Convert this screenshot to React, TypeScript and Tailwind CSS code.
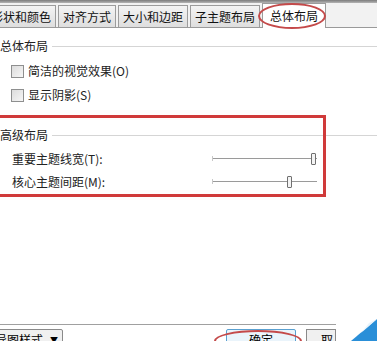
const font = { fontFamily: '"Noto Sans CJK SC", "Liberation Sans", sans-serif' };

const tabs = ["形状和颜色", "对齐方式", "大小和边距", "子主题布局"];

function Checkbox({ label }: { label: string }) {
  return (
    <div className="flex h-[24px] items-center pl-[11px]">
      <span className="mr-[4px] h-[13px] w-[13px] border border-[#8e8f8f] bg-gradient-to-br from-[#dcdcdc] to-[#f6f6f6]" />
      <span className="text-[12px] text-[#222]">{label}</span>
    </div>
  );
}

function Slider({ label, pos }: { label: string; pos: number }) {
  return (
    <div className="flex h-[23px] items-center pl-[12px]">
      <span className="w-[200px] text-[12px] text-[#222]">{label}</span>
      <div className="relative h-[12px] w-[105px]">
        <div className="absolute left-0 top-[5px] h-[1px] w-full bg-[#9a9a9a]" />
        <div className="absolute left-0 top-[3px] h-[5px] w-[1px] bg-[#c8c8c8]" />
        <div
          className="absolute top-0 h-[12px] w-[5px] rounded-[1px] border border-[#707070] bg-[#f4f4f4]"
          style={{ left: pos }}
        />
      </div>
    </div>
  );
}

function Section({ title }: { title: string }) {
  return (
    <div className="flex h-[20px] items-center">
      <span className="text-[12px] text-[#222]">{title}</span>
      <div className="ml-[4px] h-[1px] flex-1 bg-[#d5d5d5]" />
    </div>
  );
}

export default function App() {
  return (
    <div className="relative h-[341px] w-[377px] overflow-hidden bg-white" style={font}>
      <div className="h-[3px] bg-gradient-to-b from-[#7c7c7c] to-[#b5b5b5]" />
      <div className="flex h-[25px] items-end border-b border-[#9a9a9a] bg-[#f2f2f2]">
        <div className="ml-[-14px] flex items-end">
          {tabs.map((t) => (
            <div
              key={t}
              className="mr-[2px] flex h-[22px] items-center border border-b-0 border-[#9c9c9c] bg-gradient-to-b from-[#f4f4f4] to-[#dedede] px-[4px] pt-[1px] text-[12px] text-[#111]"
            >
              {t}
            </div>
          ))}
          <div className="mb-[-1px] flex h-[25px] items-center border border-b-0 border-[#9c9c9c] bg-white px-[7px] text-[12px] text-[#111]">
            总体布局
          </div>
        </div>
      </div>

      <div className="mt-[8px]">
        <Section title="总体布局" />
        <div className="mt-[3px]">
          <Checkbox label="简洁的视觉效果(O)" />
          <Checkbox label="显示阴影(S)" />
        </div>
        <div className="mt-[18px]">
          <Section title="高级布局" />
        </div>
        <div className="mt-[2px]">
          <Slider label="重要主题线宽(T):" pos={99} />
          <Slider label="核心主题间距(M):" pos={75} />
        </div>
      </div>

      <div className="absolute left-0 top-[324px] flex w-[336px] flex-col">
        <div className="h-[1px] bg-[#a0a0a0]" />
        <div className="mt-[4px] flex items-start">
          <div className="ml-[-10px] flex h-[22px] w-[73px] items-center justify-between rounded-[2px] border border-[#8a8a8a] bg-[#f0f0f0] px-[4px] text-[12px]">
            <span>导图样式</span>
            <span className="text-[8px]">▼</span>
          </div>
          <div className="ml-auto flex h-[22px] w-[70px] items-center justify-center rounded-[2px] border border-[#5aa0d0] bg-[#eaf4fb] text-[12px]">
            确定
          </div>
          <div className="ml-[10px] flex h-[22px] w-[30px] items-center justify-end border border-[#8a8a8a] bg-[#f0f0f0] pr-[2px] text-[12px]">
            取
          </div>
        </div>
      </div>

      {/* annotations */}
      <div className="pointer-events-none absolute left-[-3px] top-[115px] h-[82px] w-[329px] border-[3px] border-[#d03a3a]" />
      <div className="pointer-events-none absolute left-[258px] top-[3px] h-[26px] w-[68px] rounded-[50%] border-2 border-[#c44a4a]" />
      <div className="pointer-events-none absolute left-[214px] top-[330px] h-[22px] w-[88px] rounded-[50%] border-2 border-[#c44a4a]" />
      <svg className="absolute right-0 bottom-0" width="26" height="22" viewBox="0 0 26 22">
        <polygon points="26,0 26,22 0,22" fill="#2a8fd8" />
        <polygon points="18,4 26,0 10,14" fill="#e8f3fb" />
      </svg>
    </div>
  );
}
